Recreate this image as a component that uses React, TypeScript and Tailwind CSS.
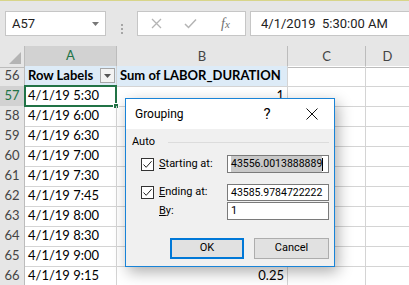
import React from "react";

const rows = [
  { n: 57, a: "4/1/19 5:30", b: "1" },
  { n: 58, a: "4/1/19 6:00", b: "" },
  { n: 59, a: "4/1/19 6:30", b: "" },
  { n: 60, a: "4/1/19 7:00", b: "" },
  { n: 61, a: "4/1/19 7:30", b: "" },
  { n: 62, a: "4/1/19 7:45", b: "" },
  { n: 63, a: "4/1/19 8:00", b: "" },
  { n: 64, a: "4/1/19 8:30", b: "" },
  { n: 65, a: "4/1/19 9:00", b: "" },
  { n: 66, a: "4/1/19 9:15", b: "0.25" },
];

const cols = "grid grid-cols-[25px_92px_171px_78px_1fr]";

const Check = () => (
  <div className="w-[13px] h-[13px] border border-[#333] bg-white flex items-center justify-center">
    <svg width="11" height="11" viewBox="0 0 11 11">
      <path d="M1.5 5.5 L4.2 8.3 L9.6 2.2" fill="none" stroke="#222" strokeWidth="1" />
    </svg>
  </div>
);

const Field = ({ children }: { children: React.ReactNode }) => (
  <div className="w-[102px] h-full border border-[#7a7a7a] bg-white flex items-center pl-[3px] text-[11px] text-black">
    {children}
  </div>
);

export default function App() {
  return (
    <div className="relative w-[409px] h-[285px] overflow-hidden bg-white font-['Lato',sans-serif] text-[13px] text-black">
      {/* formula bar */}
      <div className="h-[46px] bg-[#e6e6e6] border-t border-[#d8d58a] pt-[10px] flex font-['Roboto',sans-serif] text-[13px]">
        <div className="ml-[5px] w-[101px] h-[25px] bg-white border border-[#c6c6c6] flex items-center pl-[6px]">
          <span className="text-[#222]">A57</span>
          <svg className="ml-auto mr-[6px]" width="7" height="4" viewBox="0 0 7 4">
            <path d="M0 0 H7 L3.5 4 Z" fill="#777" />
          </svg>
        </div>
        <div className="w-[31px] flex flex-col items-center justify-center gap-[2px]">
          <span className="w-[2px] h-[2px] bg-[#a6a6a6]" />
          <span className="w-[2px] h-[2px] bg-[#a6a6a6]" />
          <span className="w-[2px] h-[2px] bg-[#a6a6a6]" />
        </div>
        <div className="w-[109px] h-[25px] bg-white border border-[#c6c6c6] flex items-center">
          <svg className="ml-[13px]" width="11" height="11" viewBox="0 0 11 11">
            <path d="M1 1 L10 10 M10 1 L1 10" stroke="#b4b4b4" strokeWidth="1.3" />
          </svg>
          <svg className="ml-[22px]" width="13" height="11" viewBox="0 0 13 11">
            <path d="M1 6 L4.5 9.5 L12 1.5" fill="none" stroke="#b4b4b4" strokeWidth="1.5" />
          </svg>
          <span className="ml-[24px] font-['Liberation_Serif',serif] italic text-[14px] text-[#707070]">
            f<span className="text-[11px]">x</span>
          </span>
        </div>
        <div className="ml-[4px] flex-1 h-[25px] bg-white border border-r-0 border-[#c6c6c6] flex items-center pl-[10px] text-[#222]">
          4/1/2019&nbsp;&nbsp;5:30:00 AM
        </div>
      </div>

      {/* column headers */}
      <div className={`${cols} h-[20px] bg-[#e6e6e6] text-[#444]`}>
        <div className="border-r border-b border-[#bcbcbc] relative">
          <svg className="absolute right-[3px] bottom-[3px]" width="12" height="12" viewBox="0 0 12 12">
            <path d="M12 0 V12 H0 Z" fill="#b4b4b4" />
          </svg>
        </div>
        <div className="bg-[#d2d2d2] border-r border-[#bcbcbc] border-b-2 border-b-[#217346] flex items-center justify-center text-[#217346]">
          A
        </div>
        <div className="border-r border-b border-[#bcbcbc] flex items-center justify-center">B</div>
        <div className="border-r border-b border-[#bcbcbc] flex items-center justify-center">C</div>
        <div className="border-b border-[#bcbcbc] flex items-center justify-center">D</div>
      </div>

      {/* pivot header row */}
      <div className={`${cols} h-[20px]`}>
        <div className="bg-[#e6e6e6] border-r border-b border-[#bcbcbc] flex items-center justify-center text-[#444]">
          56
        </div>
        <div className="bg-[#ddebf7] border-r border-b border-[#d4d4d4] flex items-center pl-[3px] font-bold">
          Row Labels
          <div className="ml-auto mr-[1px] w-[15px] h-[15px] bg-[#f3f3f3] border border-[#a6a6a6] flex items-center justify-center">
            <svg width="7" height="4" viewBox="0 0 7 4">
              <path d="M0 0 H7 L3.5 4 Z" fill="#555" />
            </svg>
          </div>
        </div>
        <div className="bg-[#ddebf7] border-r border-b border-[#d4d4d4] flex items-center pl-[3px] font-bold">
          Sum of LABOR_DURATION
        </div>
        <div className="border-r border-b border-[#d4d4d4]" />
        <div className="border-b border-[#d4d4d4]" />
      </div>

      {rows.map((r) => {
        const sel = r.n === 57;
        return (
          <div key={r.n} className={`${cols} h-[20px]`}>
            <div
              className={`border-r border-b border-[#bcbcbc] flex items-center justify-center ${
                sel ? "bg-[#d2d2d2] text-[#217346]" : "bg-[#e6e6e6] text-[#444]"
              }`}
            >
              {r.n}
            </div>
            <div className="relative border-r border-b border-[#d4d4d4] flex items-center pl-[3px]">
              {r.a}
              {sel && (
                <>
                  <div className="absolute left-[-1px] top-[-1px] right-[-1px] bottom-[-1px] border-2 border-[#217346]" />
                  <div className="absolute right-[-3px] bottom-[-3px] w-[6px] h-[6px] bg-[#217346] border border-white" />
                </>
              )}
            </div>
            <div className="border-r border-b border-[#d4d4d4] flex items-center justify-end pr-[3px]">{r.b}</div>
            <div className="border-r border-b border-[#d4d4d4]" />
            <div className="border-b border-[#d4d4d4]" />
          </div>
        );
      })}

      {/* Grouping dialog */}
      <div className="absolute left-[125px] top-[98px] w-[210px] h-[169px] border border-[#1883d7] bg-[#f0f0f0] shadow-[3px_5px_14px_rgba(0,0,0,0.32)] flex flex-col font-['Roboto',sans-serif] text-[11px] text-black">
        <div className="h-[30px] bg-white flex items-center pl-[9px]">
          <span className="text-[12px]">Grouping</span>
          <span className="ml-auto w-[46px] text-center text-[15px]">?</span>
          <div className="w-[44px] flex justify-center">
            <svg width="12" height="12" viewBox="0 0 12 12">
              <path d="M0.5 0.5 L11.5 11.5 M11.5 0.5 L0.5 11.5" stroke="#111" strokeWidth="1" />
            </svg>
          </div>
        </div>

        <div className="mt-[6px] h-[14px] flex items-center pl-[6px]">
          <span>Auto</span>
          <div className="flex-1 h-px bg-[#dcdcdc] ml-[13px] mr-[5px]" />
        </div>

        <div className="mt-[6px] h-[18px] flex items-center pl-[15px]">
          <Check />
          <span className="ml-[5px] w-[68px]">
            <span className="underline">S</span>tarting at:
          </span>
          <Field>
            <span className="bg-[#c8c8c8] text-[10.5px]">43556.0013888889</span>
            <span className="w-px h-[13px] bg-black" />
          </Field>
        </div>

        <div className="mt-[11px] h-[17px] flex items-center pl-[15px]">
          <Check />
          <span className="ml-[5px] w-[68px]">
            <span className="underline">E</span>nding at:
          </span>
          <Field>
            <span className="text-[10.5px]">43585.9784722222</span>
          </Field>
        </div>

        <div className="mt-[1px] h-[18px] flex items-center pl-[33px]">
          <span className="w-[68px]">
            <span className="underline">B</span>y:
          </span>
          <Field>1</Field>
        </div>

        <div className="mt-[18px] h-[21px] flex">
          <div className="ml-[44px] w-[74px] h-full bg-[#e1e1e1] border-2 border-[#0078d7] flex items-center justify-center">
            OK
          </div>
          <div className="ml-[10px] w-[75px] h-full bg-[#e1e1e1] border border-[#adadad] flex items-center justify-center">
            Cancel
          </div>
        </div>
      </div>
    </div>
  );
}
